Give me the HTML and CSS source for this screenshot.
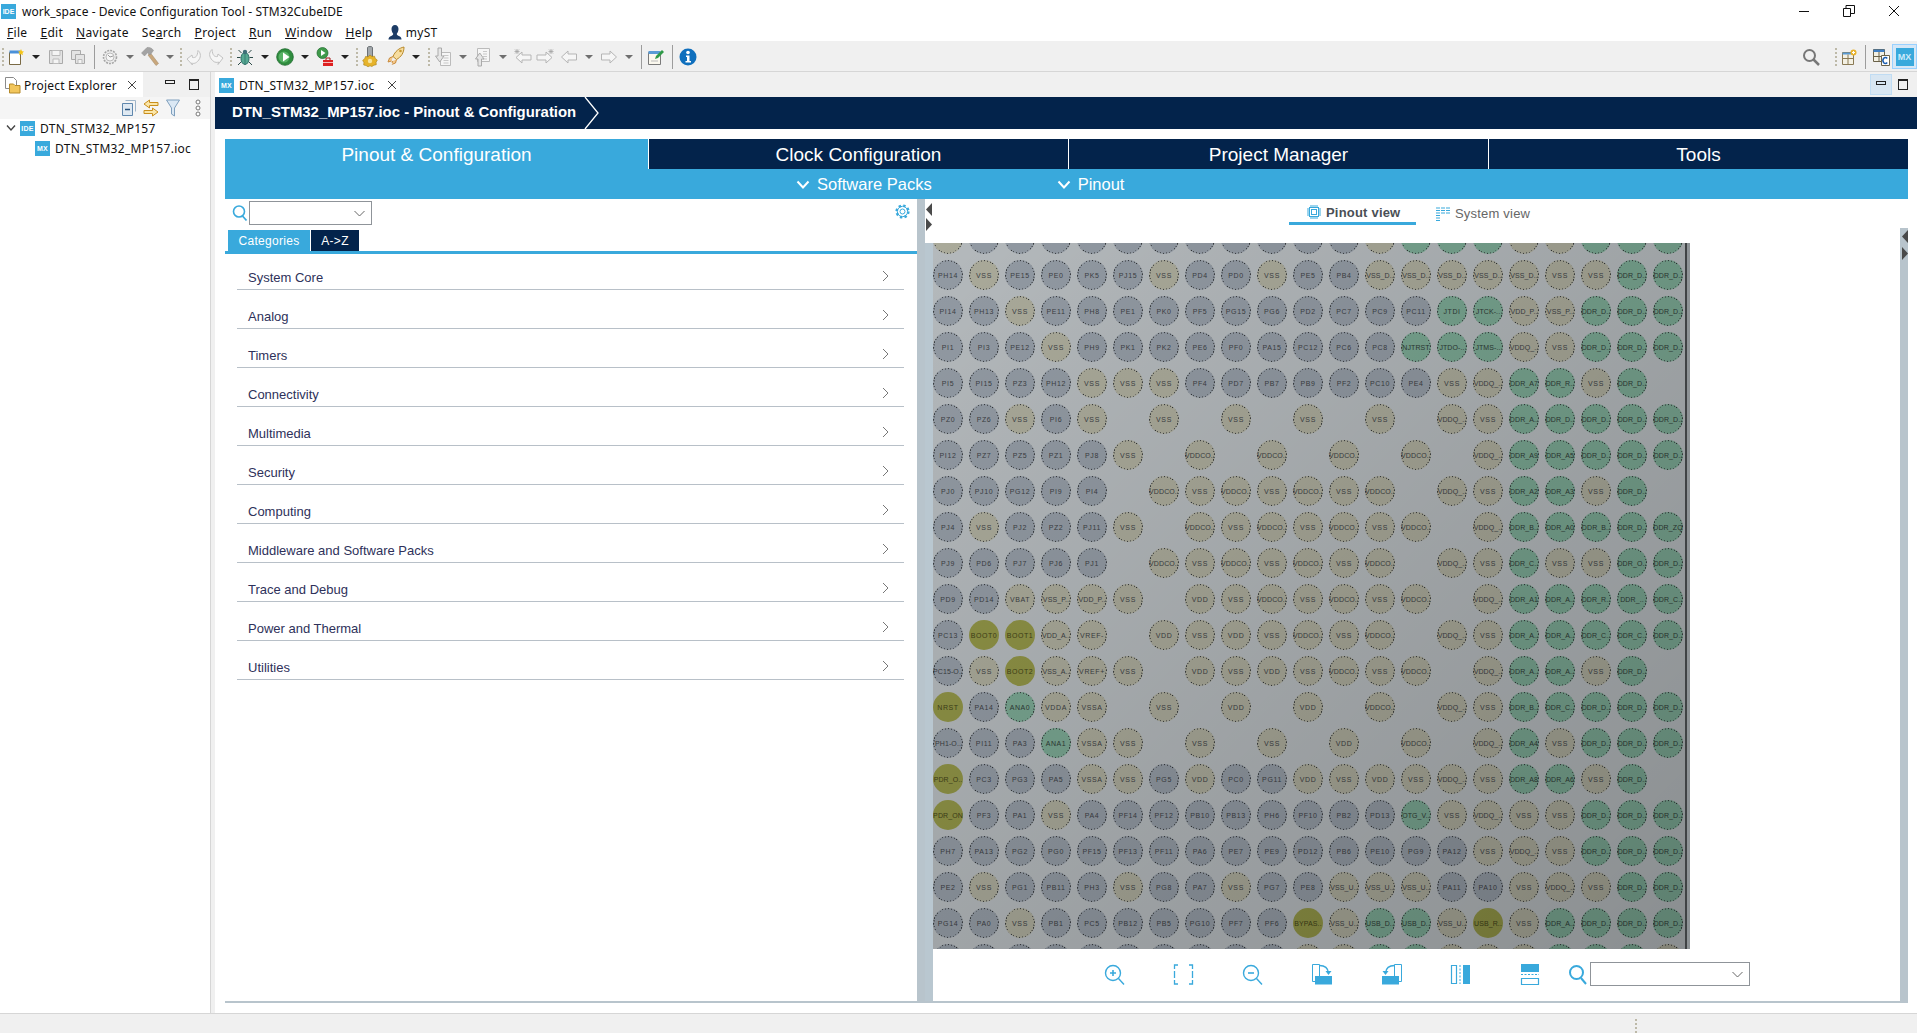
FILE: index.html
```html
<!DOCTYPE html>
<html lang="en">
<head>
  <meta charset="UTF-8" />
  <title>work_space - Device Configuration Tool - STM32CubeIDE</title>
  <link rel="stylesheet" href="styles.css">
</head>
<body>
  <div class="title-bar">
    <span class="badge badge-title">IDE</span>
    <span class="title-text">work_space - Device Configuration Tool - STM32CubeIDE</span>
    <div class="win-buttons">
      <svg width="12" height="12" viewBox="0 0 12 12"><path d="M1 6.500h10" stroke="#111" fill="none"/></svg>
      <svg width="12" height="12" viewBox="0 0 12 12"><path d="M.5 3.500h7v8h-7zM3 3.500V.5h8.500v8H7.500" stroke="#111" fill="none"/></svg>
      <svg width="12" height="12" viewBox="0 0 12 12"><path d="M1 1l10 10M11 1L1 11" stroke="#111" fill="none"/></svg>
    </div>
  </div>

  <nav class="menu-bar">
    <span><u>F</u>ile</span>
    <span><u>E</u>dit</span>
    <span><u>N</u>avigate</span>
    <span>Se<u>a</u>rch</span>
    <span><u>P</u>roject</span>
    <span><u>R</u>un</span>
    <span><u>W</u>indow</span>
    <span><u>H</u>elp</span>
    <span class="menu-user">
      <svg width="14" height="15" viewBox="0 0 14 15"><path d="M7 0c2.200 0 3.500 1.700 3.500 4S9.400 8 8.800 8.800c0 1 .6 1.500 2 2.100 1.700.7 2.700 1.300 2.700 3.600H.5c0-2.300 1-2.900 2.700-3.600 1.400-.6 2-1.100 2-2.100C4.600 8 3.500 6.300 3.500 4S4.800 0 7 0z" fill="#1d3c66"/></svg>
      myST
    </span>
  </nav>

  <div class="main-toolbar">
    <i class="grip w5"></i>
    <b class="tool"><svg width="18" height="18" viewBox="0 0 18 18"><path d="M2.500 4.500h11v12h-11z" fill="#fff" stroke="#7a6a45"/><path d="M2.500 2.500h11v3h-11z" fill="#4a90d9"/><path d="M14 1l1 2.200 2 .3-1.500 1.500.4 2.200-1.900-1.100-1.900 1.100.4-2.200L11 3.500l2-.3z" fill="#f5c518"/></svg></b>
    <b class="drop"></b>
    <b class="tool"><svg width="16" height="16" viewBox="0 0 16 16"><path d="M1.500 1.500h13v13h-13z" fill="#e4e4e4" stroke="#aaa"/><path d="M4 1.500h8v5H4zM5 10h6v4.500H5z" fill="#f4f4f4" stroke="#bbb"/></svg></b>
    <b class="tool"><svg width="16" height="16" viewBox="0 0 16 16"><path d="M1.500 1.500h9v9h-9z" fill="#e4e4e4" stroke="#aaa"/><path d="M5.500 5.500h9v9h-9z" fill="#e4e4e4" stroke="#aaa"/><path d="M8 10.500h4v4H8z" fill="#f4f4f4" stroke="#bbb"/></svg></b>
    <i class="sep w10"></i>
    <b class="tool"><svg width="16" height="16" viewBox="0 0 16 16"><circle cx="8" cy="8" r="6.500" fill="#ececec" stroke="#a5a5a5" stroke-width="1.600" stroke-dasharray="2 1"/><circle cx="8" cy="8" r="4" fill="#f6f6f6" stroke="#bbb"/><path d="M6 6l2 2 3-1" fill="none" stroke="#999"/></svg></b>
    <b class="drop off"></b>
    <b class="tool"><svg width="20" height="22" viewBox="0 0 20 22"><path d="M8 9l8 10.500 2.500-2L10.500 7z" fill="#c9a77c" stroke="#a8906f" stroke-width=".6"/><path d="M1.500 7L7 1.500c2.500-.5 5 .5 6.500 3L10 9 7.500 6.800 4.500 10z" fill="#a3a3a3" stroke="#8d8d8d" stroke-width=".5"/></svg></b>
    <b class="drop off"></b>
    <i class="grip w4"></i>
    <b class="tool"><svg width="18" height="18" viewBox="0 0 18 18"><path d="M2 11l5-4 .5 2.500c3 .5 5-1 5.500-7 3 2.500 3.500 7-.5 11-2.500 2.500-5 2-6 1.500L7.500 17z" fill="#f6f6f6" stroke="#c2c2c2"/></svg></b>
    <b class="tool"><svg width="18" height="18" viewBox="0 0 18 18"><path d="M16 11l-5-4-.5 2.500c-3 .5-5-1-5.500-7-3 2.500-3.500 7 .5 11 2.500 2.500 5 2 6 1.500l-.5 2.500z" fill="#f6f6f6" stroke="#c2c2c2" transform="translate(0 -1)"/></svg></b>
    <i class="grip w7"></i>
    <b class="tool"><svg width="18" height="18" viewBox="0 0 18 18"><path d="M5.500 5L2.500 2m10 3l3-3M4.500 9.500H1M13.500 9.500H17M5 14l-3 3m11-3l3 3" stroke="#2b4a47" fill="none"/><ellipse cx="9" cy="10.500" rx="4" ry="6" fill="#56a892" stroke="#2a6e66"/><path d="M9 5v11" stroke="#2a6e66" stroke-width=".7"/><circle cx="9" cy="4" r="2.200" fill="#3f6f78"/></svg></b>
    <b class="drop"></b>
    <b class="tool"><svg width="18" height="18" viewBox="0 0 18 18"><circle cx="9" cy="9" r="8.300" fill="#2f8c3e" stroke="#1d6a2d" stroke-width=".8"/><circle cx="8" cy="9" r="5.500" fill="#58b266"/><path d="M7 4.500l6.500 4.500L7 13.500z" fill="#fff"/></svg></b>
    <b class="drop"></b>
    <b class="tool"><svg width="18" height="20" viewBox="0 0 18 20"><circle cx="6.500" cy="6" r="5.500" fill="#3f9a4a" stroke="#1d6a2d" stroke-width=".7"/><path d="M5 3l4.500 3L5 9z" fill="#fff"/><path d="M7 13h10v6H7z" fill="#dd2020"/><path d="M10 13v-2h4v2" fill="none" stroke="#a51515"/><path d="M7 15.500h10" stroke="#fff" stroke-width=".7"/></svg></b>
    <b class="drop"></b>
    <i class="grip w5"></i>
    <b class="tool"><svg width="18" height="22" viewBox="0 0 18 22"><path d="M6.500 1.500c0-1.300 5-1.300 5 0V11h-5z" fill="#a3a8ac" stroke="#6b7074"/><path d="M9 10l2 1.500 2.500-.3.800 2.300 2 1.500-1.200 2.300.2 2.400-2.400.5-2 1.300L9 20.800l-2 1-1.900-1.300-2.400-.5.2-2.400L1.700 15.300l2-1.500.8-2.300 2.500.3z" fill="#e6b32a" stroke="#a77f16" stroke-width=".6" transform="translate(0 -1)"/><circle cx="9" cy="15" r="2.200" fill="#f7e39a"/></svg></b>
    <i class="space w4"></i>
    <b class="tool"><svg width="20" height="22" viewBox="0 0 20 22"><path d="M18 1c-5 1-9 4.500-11 9.500l3.500 3C15 11 18 7 18 1z" fill="#f7dda0" stroke="#b8892a"/><circle cx="14.500" cy="5" r="1.300" fill="#c99a30"/><path d="M7 10.500l-3.500 1.500L2 16l3.500-1 M10.500 13.500L9.500 17l-4 1.500 1-3.500" fill="#f3c78a" stroke="#c98a3a"/><path d="M3 20l3-3" stroke="#eee" stroke-width="2"/></svg></b>
    <b class="drop"></b>
    <i class="grip w7"></i>
    <b class="tool"><svg width="18" height="20" viewBox="0 0 18 20"><path d="M6.500 5.500h10v13h-10z" fill="#f6f6f6" stroke="#bbb"/><path d="M9.500 8.500h5M9.500 11h5M9.500 13.500h5M9.500 16h5" stroke="#c8c8c8"/><path d="M4 1h3.500v8H10l-4.250 6L1.500 9H4z" fill="#e6e6e6" stroke="#aaa"/></svg></b>
    <b class="drop off"></b>
    <b class="tool"><svg width="18" height="20" viewBox="0 0 18 20"><path d="M3.500 1.500h12v13h-12z" fill="#f6f6f6" stroke="#bbb"/><path d="M9 4.500h4M9 7h4M9 9.500h4M9 12h4" stroke="#c8c8c8"/><path d="M4 19h3.500v-7H10L5.750 6 1.500 12H4z" fill="#e6e6e6" stroke="#aaa"/></svg></b>
    <b class="drop off"></b>
    <b class="tool"><svg width="20" height="18" viewBox="0 0 20 18"><path d="M9 4L3 9.500 9 15v-3h9V7H9z" fill="#f6f6f6" stroke="#b5b5b5"/><path d="M2 1.500l4 4m0-4l-4 4M4 1v5M1.500 3.500h5" stroke="#a5a5a5" stroke-width=".8"/></svg></b>
    <b class="tool"><svg width="20" height="18" viewBox="0 0 20 18"><path d="M11 4l6 5.500-6 5.500v-3H2V7h9z" fill="#f6f6f6" stroke="#b5b5b5"/><path d="M14 1.500l4 4m0-4l-4 4M16 1v5M13.500 3.500h5" stroke="#a5a5a5" stroke-width=".8"/></svg></b>
    <i class="space w2"></i>
    <b class="tool"><svg width="18" height="16" viewBox="0 0 18 16"><path d="M8 2L1.500 8 8 14v-3h8.500V5H8z" fill="#f6f6f6" stroke="#b5b5b5"/></svg></b>
    <b class="drop off"></b>
    <b class="tool"><svg width="18" height="16" viewBox="0 0 18 16"><path d="M10 2l6.500 6L10 14v-3H1.500V5H10z" fill="#f6f6f6" stroke="#b5b5b5"/></svg></b>
    <b class="drop off"></b>
    <i class="sep w7"></i>
    <b class="tool"><svg width="18" height="18" viewBox="0 0 18 18"><path d="M1.500 4.500h12v12h-12z" fill="#fbf8ee" stroke="#7a7a7a"/><path d="M1.500 3h12v3h-12z" fill="#5a9bd5"/><path d="M9 8l6-6 2 2-6 6-3 1z" fill="#2f9a47"/><path d="M4 13h7" stroke="#bbb"/></svg></b>
    <i class="sep w10"></i>
    <b class="tool"><svg width="18" height="18" viewBox="0 0 18 18"><circle cx="9" cy="9" r="8.500" fill="#0f6fbd"/><circle cx="9" cy="4.500" r="1.800" fill="#fff"/><path d="M7 7.500h3.500V13H12v1.500H6.500V13H8V9H7z" fill="#fff"/></svg></b>

    <b class="tool tool-right"><svg width="18" height="18" viewBox="0 0 18 18"><circle cx="7.500" cy="7.500" r="5.500" fill="none" stroke="#777" stroke-width="2"/><path d="M11.500 11.500L17 17" stroke="#777" stroke-width="2.500"/></svg></b>
    <i class="space w11"></i>
    <i class="grip w5"></i>
    <b class="tool"><svg width="16" height="16" viewBox="0 0 16 16"><path d="M1.500 3.500h11v12h-11z" fill="#f4f1e4" stroke="#8a7a55"/><path d="M1.500 3.500h11v2h-11z" fill="#5a9bd5"/><path d="M1.500 9.500h11M7 5.500v10" stroke="#8a7a55"/><circle cx="12.500" cy="3.500" r="3" fill="#e8b32e"/><path d="M11 3.500h3M12.500 2v3" stroke="#fff"/></svg></b>
    <i class="sep w10 tall"></i>
    <b class="tool"><svg width="18" height="18" viewBox="0 0 18 18"><path d="M1.500 1.500h11v12h-11z" fill="#f4f1e4" stroke="#6b6249"/><path d="M1.500 1.500h11v2.500h-11z" fill="#3f7fc4"/><path d="M1.500 8.500h11M7 4v10" stroke="#6b6249"/><path d="M9.500 7.500h8v10h-8z" fill="#fff" stroke="#6b6249"/><path d="M15.200 10.500a2.400 3 0 1 0 0 4" fill="none" stroke="#1e5fb0" stroke-width="1.500"/></svg></b>
    <span class="tool-mx"><span class="badge">MX</span></span>
  </div>

  <div class="workbench">
    <aside class="explorer">
      <div class="view-tabs">
        <div class="view-tab">
          <svg width="17" height="18" viewBox="0 0 17 18"><path d="M1.500 1.500h8l3 3v8h-11z" fill="#fff" stroke="#8a8a8a"/><path d="M5.500 8h4l1.500 1.500h5v7.500H5.500z" fill="#f2c65c" stroke="#b58a2a"/></svg>
          <span>Project Explorer</span>
          <svg class="x-icon" width="10" height="10" viewBox="0 0 10 10"><path d="M1 1l8 8M9 1L1 9" stroke="#444" fill="none"/></svg>
        </div>
        <div class="view-ctrls">
          <span class="ctrl-min"></span>
          <span class="ctrl-max"></span>
        </div>
      </div>
      <div class="view-tools">
        <svg width="14" height="16" viewBox="0 0 14 16"><path d="M3.500.5h10v11" fill="none" stroke="#9fb5c9"/><path d="M.5 3.500h10v12H.5z" fill="#dfe9f2" stroke="#5f87ad"/><path d="M3 9.500h5" stroke="#27527c" stroke-width="1.500"/></svg>
        <svg width="16" height="18" viewBox="0 0 16 18"><path d="M6.500 1L1 5l5.500 4V6.500H15v-3H6.500z" fill="#fbe6a8" stroke="#c98f1d"/><path d="M9.500 9l5.500 4-5.500 4v-2.500H1v-3h8.500z" fill="#fbe6a8" stroke="#c98f1d"/></svg>
        <svg width="14" height="18" viewBox="0 0 14 18"><path d="M.5 1h13L8.500 9v8l-3-2V9z" fill="#dbe8f4" stroke="#7f9fbd"/></svg>
        <svg class="view-more" width="6" height="18" viewBox="0 0 6 18"><circle cx="3" cy="3" r="2" fill="#fff" stroke="#777"/><circle cx="3" cy="9" r="2" fill="#fff" stroke="#777"/><circle cx="3" cy="15" r="2" fill="#fff" stroke="#777"/></svg>
      </div>
      <div class="tree">
        <div class="tree-row">
          <svg width="10" height="8" viewBox="0 0 10 8"><path d="M1 1.500l4 4.500 4-4.500" fill="none" stroke="#444" stroke-width="1.400"/></svg>
          <span class="badge">IDE</span>
          <span>DTN_STM32_MP157</span>
        </div>
        <div class="tree-row tree-child">
          <span class="badge">MX</span>
          <span>DTN_STM32_MP157.ioc</span>
        </div>
      </div>
    </aside>

    <main class="editor">
      <div class="editor-tabs">
        <div class="editor-tab">
          <span class="badge">MX</span>
          <span>DTN_STM32_MP157.ioc</span>
          <svg class="x-icon" width="10" height="10" viewBox="0 0 10 10"><path d="M1 1l8 8M9 1L1 9" stroke="#444" fill="none"/></svg>
        </div>
        <div class="view-ctrls editor-ctrls">
          <span class="ctrl-box"><span class="ctrl-min"></span></span>
          <span class="ctrl-max"></span>
        </div>
      </div>

      <div class="crumb">
        <span class="crumb-text">DTN_STM32_MP157.ioc - Pinout &amp; Configuration</span>
        <svg width="16" height="32" viewBox="0 0 16 32"><path d="M1 0l13 16L1 32" fill="none" stroke="#fff" stroke-width="1.300"/></svg>
      </div>

      <div class="editor-body">
        <div class="main-tabs">
          <div class="main-tab active">Pinout &amp; Configuration</div>
          <div class="main-tab">Clock Configuration</div>
          <div class="main-tab">Project Manager</div>
          <div class="main-tab">Tools</div>
        </div>
        <div class="sub-bar">
          <span class="sub-item sub-packs"><svg width="14" height="10" viewBox="0 0 14 10"><path d="M1.500 1.500L7 7.500l5.500-6" fill="none" stroke="#fff" stroke-width="2"/></svg>Software Packs</span>
          <span class="sub-item sub-pinout"><svg width="14" height="10" viewBox="0 0 14 10"><path d="M1.500 1.500L7 7.500l5.500-6" fill="none" stroke="#fff" stroke-width="2"/></svg>Pinout</span>
        </div>

        <div class="work-area">
          <section class="left-panel">
            <div class="search-row">
              <svg class="search-icon" width="16" height="18" viewBox="0 0 16 18"><circle cx="7" cy="7.500" r="5.500" fill="none" stroke="#39a9dc" stroke-width="1.600"/><path d="M10.500 12l4 4.500" stroke="#39a9dc" stroke-width="1.800"/></svg>
              <div class="combo combo-small"><svg width="11" height="7" viewBox="0 0 11 7"><path d="M.5 1l5 5 5-5" fill="none" stroke="#666"/></svg></div>
              <svg class="gear" width="17" height="17" viewBox="0 0 17 17"><circle cx="8.500" cy="8.500" r="5.800" fill="none" stroke="#39a9dc" stroke-width="2.600" stroke-dasharray="2.300 2.260"/><circle cx="8.500" cy="8.500" r="5.200" fill="none" stroke="#39a9dc"/><circle cx="8.500" cy="8.500" r="2.500" fill="none" stroke="#39a9dc"/></svg>
            </div>
            <div class="list-tabs">
              <span class="list-tab active">Categories</span>
              <span class="list-tab">A-&gt;Z</span>
            </div>
            <ul class="cat-list">
              <li>System Core<svg width="7" height="12" viewBox="0 0 7 12"><path d="M1 1l5 5-5 5" fill="none" stroke="#777"/></svg></li>
              <li>Analog<svg width="7" height="12" viewBox="0 0 7 12"><path d="M1 1l5 5-5 5" fill="none" stroke="#777"/></svg></li>
              <li>Timers<svg width="7" height="12" viewBox="0 0 7 12"><path d="M1 1l5 5-5 5" fill="none" stroke="#777"/></svg></li>
              <li>Connectivity<svg width="7" height="12" viewBox="0 0 7 12"><path d="M1 1l5 5-5 5" fill="none" stroke="#777"/></svg></li>
              <li>Multimedia<svg width="7" height="12" viewBox="0 0 7 12"><path d="M1 1l5 5-5 5" fill="none" stroke="#777"/></svg></li>
              <li>Security<svg width="7" height="12" viewBox="0 0 7 12"><path d="M1 1l5 5-5 5" fill="none" stroke="#777"/></svg></li>
              <li>Computing<svg width="7" height="12" viewBox="0 0 7 12"><path d="M1 1l5 5-5 5" fill="none" stroke="#777"/></svg></li>
              <li>Middleware and Software Packs<svg width="7" height="12" viewBox="0 0 7 12"><path d="M1 1l5 5-5 5" fill="none" stroke="#777"/></svg></li>
              <li>Trace and Debug<svg width="7" height="12" viewBox="0 0 7 12"><path d="M1 1l5 5-5 5" fill="none" stroke="#777"/></svg></li>
              <li>Power and Thermal<svg width="7" height="12" viewBox="0 0 7 12"><path d="M1 1l5 5-5 5" fill="none" stroke="#777"/></svg></li>
              <li>Utilities<svg width="7" height="12" viewBox="0 0 7 12"><path d="M1 1l5 5-5 5" fill="none" stroke="#777"/></svg></li>
            </ul>
          </section>

          <div class="sash-left">
            <div class="sash-arrows">
              <svg width="8" height="15" viewBox="0 0 8 15"><path d="M7 1v13L1 7.500z" fill="#4a4a4a"/></svg>
              <svg width="8" height="15" viewBox="0 0 8 15"><path d="M1 1v13l6-6.500z" fill="#4a4a4a"/></svg>
            </div>
          </div>

          <section class="right-panel">
            <div class="view-switch">
              <div class="switch-tab active">
                <svg width="14" height="14" viewBox="0 0 14 14"><rect x="2.500" y="2.500" width="9" height="9" fill="none" stroke="#39a9dc"/><rect x="4.500" y="4.500" width="5" height="5" fill="none" stroke="#39a9dc"/><path d="M4 0v2m2-2v2m2-2v2m2-2v2M4 12v2m2-2v2m2-2v2m2-2v2M0 4h2M0 6h2M0 8h2M0 10h2M12 4h2m-2 2h2m-2 2h2m-2 2h2" stroke="#39a9dc"/></svg>
                Pinout view
              </div>
              <div class="switch-tab">
                <svg width="14" height="14" viewBox="0 0 14 14"><path d="M0 1h4M0 3.500h4M0 6h4M0 8.500h4M0 11h4M0 13.500h4M5 1h4M5 3.500h4M5 6h4M10 1h4M10 3.500h4M10 6h4" stroke="#39a9dc" stroke-width="1.200"/></svg>
                System view
              </div>
            </div>
            <div class="pin-view">
              <div class="pin-canvas">
                <div class="pin-grid" id="pinGrid"></div>
              </div>
            </div>
            <div class="zoom-bar">
              <span class="zoom-cell"><svg width="21" height="21" viewBox="0 0 21 21"><circle cx="9" cy="9" r="7.500" fill="none" stroke="#39a9dc" stroke-width="1.400"/><path d="M14.500 14.500L20 20.500" stroke="#39a9dc" stroke-width="1.400"/><path d="M6 9h6M9 6v6" stroke="#39a9dc" stroke-width="1.600"/></svg></span>
              <span class="zoom-cell"><svg width="21" height="21" viewBox="0 0 21 21"><path d="M5 1H1.500v4M16 1h3.500v4M5 20H1.500v-4M16 20h3.500v-4M1.500 7v7" fill="none" stroke="#39a9dc" stroke-width="1.300"/><path d="M19.500 7v7" stroke="#39a9dc" stroke-width="1.300"/></svg></span>
              <span class="zoom-cell"><svg width="21" height="21" viewBox="0 0 21 21"><circle cx="9" cy="9" r="7.500" fill="none" stroke="#39a9dc" stroke-width="1.400"/><path d="M14.500 14.500L20 20.500" stroke="#39a9dc" stroke-width="1.400"/><path d="M6 9h6" stroke="#39a9dc" stroke-width="1.600"/></svg></span>
              <span class="zoom-cell"><svg width="21" height="21" viewBox="0 0 21 21"><path d="M.5.500h7v17h-7z" fill="none" stroke="#39a9dc"/><path d="M3 12h17v8.500H3z" fill="#39a9dc"/><path d="M7.500 1.500C13 1.500 16 4 16.500 9" fill="none" stroke="#39a9dc" stroke-width="1.300"/><path d="M13.500 7h6l-3 4z" fill="#39a9dc"/></svg></span>
              <span class="zoom-cell"><svg width="21" height="21" viewBox="0 0 21 21"><path d="M13.500.500h7v17h-7z" fill="none" stroke="#39a9dc"/><path d="M1 12h17v8.500H1z" fill="#39a9dc"/><path d="M13.500 1.500C8 1.500 5 4 4.500 9" fill="none" stroke="#39a9dc" stroke-width="1.300"/><path d="M1.500 7h6l-3 4z" fill="#39a9dc"/></svg></span>
              <span class="zoom-cell"><svg width="21" height="21" viewBox="0 0 21 21"><path d="M1.500 1.500h5v18h-5z" fill="none" stroke="#39a9dc" stroke-width="1.200"/><path d="M10 1v19" stroke="#39a9dc" stroke-dasharray="2 1.500"/><path d="M13 1h7v19h-7z" fill="#39a9dc"/></svg></span>
              <span class="zoom-cell"><svg width="21" height="21" viewBox="0 0 21 21"><path d="M2 0h18v8H2z" fill="#39a9dc"/><path d="M2 10.500h18" stroke="#39a9dc" stroke-dasharray="2 1.500"/><path d="M2.500 14.500h17v6h-17z" fill="none" stroke="#39a9dc" stroke-width="1.200"/></svg></span>
              <svg class="zoom-search" width="20" height="21" viewBox="0 0 20 21"><circle cx="8.500" cy="8.500" r="6.500" fill="none" stroke="#39a9dc" stroke-width="2"/><path d="M13 14l5 6" stroke="#39a9dc" stroke-width="2"/></svg>
              <div class="combo combo-zoom"><svg width="11" height="7" viewBox="0 0 11 7"><path d="M.5 1l5 5 5-5" fill="none" stroke="#666"/></svg></div>
            </div>
          </section>

          <div class="sash-right">
            <svg width="9" height="15" viewBox="0 0 9 15"><path d="M8 1v13L2 7.500z" fill="#4a4a4a"/></svg>
            <svg width="9" height="15" viewBox="0 0 9 15"><path d="M2 1v13l6-6.500z" fill="#4a4a4a"/></svg>
          </div>
        </div>
      </div>
    </main>
  </div>

  <div class="status-bar"><i class="grip w5"></i></div>

  <script src="script.js"></script>
</body>
</html>
```

FILE: styles.css
```css
* {
  box-sizing: border-box;
}

body {
  margin: 0;
  height: 100vh;
  overflow: hidden;
  display: flex;
  flex-direction: column;
  font-family: "Noto Sans", sans-serif;
  font-size: 12px;
  color: #111;
  background-color: #fff;
}

.badge {
  width: 15px;
  height: 15px;
  flex: none;
  display: inline-flex;
  align-items: center;
  justify-content: center;
  background-color: #39a9dc;
  color: #fff;
  font-family: "Liberation Sans", sans-serif;
  font-size: 7px;
  font-weight: bold;
}

/* window title + menu */
.title-bar {
  height: 22px;
  display: flex;
  align-items: center;
  padding-left: 1px;
  flex: none;
}

.title-text {
  margin-left: 6px;
  letter-spacing: .07px;
  white-space: nowrap;
}

.win-buttons {
  margin-left: auto;
  display: flex;
  gap: 33px;
  padding-right: 17px;
}

.menu-bar {
  height: 19px;
  flex: none;
  display: flex;
  align-items: center;
  gap: 13px;
  padding: 1px 0 0 7px;
  letter-spacing: .3px;
  white-space: nowrap;
}

.menu-user {
  display: flex;
  align-items: center;
  gap: 4px;
  margin-left: 2px;
}

/* main toolbar */
.main-toolbar {
  height: 31px;
  flex: none;
  display: flex;
  align-items: center;
  padding-top: 1px;
  background-color: #f0f0f0;
  border-bottom: 1px solid #d6d6d6;
}

.tool {
  width: 22px;
  height: 24px;
  flex: none;
  display: flex;
  align-items: center;
  justify-content: center;
}

.tool-right {
  margin-left: auto;
}

.drop {
  width: 18px;
  flex: none;
  display: flex;
  justify-content: center;
}

.drop::after {
  content: "";
  border-left: 4px solid transparent;
  border-right: 4px solid transparent;
  border-top: 4px solid #222;
}

.drop.off::after {
  border-top-color: #6f6f6f;
}

.grip,
.sep,
.space {
  display: flex;
  flex: none;
  justify-content: center;
}

.grip::after {
  content: "";
  height: 18px;
  border-left: 2px dotted #bdb9a8;
}

.sep::after {
  content: "";
  height: 24px;
  border-left: 1px solid #9c9c9c;
}

.w2 { width: 2px; }
.w4 { width: 4px; }
.w5 { width: 5px; }
.w7 { width: 7px; }
.w10 { width: 10px; }
.w11 { width: 11px; }

.tool-mx {
  width: 25px;
  height: 25px;
  flex: none;
  display: flex;
  align-items: center;
  justify-content: center;
  background-color: #d5e7f7;
  border: 1px solid #99d1ff;
}

.tool-mx .badge {
  width: 18px;
  height: 18px;
  font-size: 9px;
  color: #cdeafa;
}

/* workbench */
.workbench {
  flex: 1;
  min-height: 0;
  display: flex;
  background-color: #f0f0f0;
}

.explorer {
  width: 211px;
  flex: none;
  display: flex;
  flex-direction: column;
  background-color: #fff;
  border-right: 1px solid #d6d6d6;
}

.view-tabs {
  height: 25px;
  flex: none;
  display: flex;
  background-color: #f0f0f0;
}

.view-tab {
  width: 143px;
  display: flex;
  align-items: center;
  gap: 3px;
  padding: 1px 0 0 4px;
  background-color: #fff;
  letter-spacing: .22px;
  white-space: nowrap;
}

.x-icon {
  margin-left: 7px;
  flex: none;
}

.view-ctrls {
  flex: 1;
  display: flex;
  align-items: center;
  justify-content: flex-end;
  gap: 14px;
  padding-right: 11px;
}

.ctrl-min {
  display: block;
  width: 10px;
  height: 4px;
  border: 1px solid #222;
  margin-bottom: 5px;
}

.ctrl-max {
  display: block;
  width: 10px;
  height: 11px;
  border: 1px solid #222;
  border-top-width: 2px;
}

.view-tools {
  height: 22px;
  flex: none;
  display: flex;
  align-items: center;
  justify-content: flex-end;
  gap: 7px;
  padding-right: 9px;
  background-color: #f5f5f5;
}

.view-more {
  margin-left: 8px;
}

.tree {
  margin-top: -1px;
}

.tree-row {
  height: 20px;
  display: flex;
  align-items: center;
  gap: 5px;
  padding-left: 6px;
  letter-spacing: .28px;
  white-space: nowrap;
}

.tree-row .badge {
  margin-left: -1px;
}

.tree-child {
  padding-left: 36px;
}

.editor {
  width: 1702px;
  flex: none;
  margin-left: 4px;
  display: flex;
  flex-direction: column;
  background-color: #fff;
}

.editor-tabs {
  height: 25px;
  flex: none;
  display: flex;
  background-color: #f0f0f0;
}

.editor-tab {
  width: 185px;
  display: flex;
  align-items: center;
  gap: 5px;
  padding: 1px 0 0 4px;
  background-color: #fff;
  letter-spacing: .25px;
  white-space: nowrap;
}

.editor-ctrls {
  gap: 6px;
  padding-right: 9px;
}

.ctrl-box {
  width: 22px;
  height: 21px;
  display: flex;
  align-items: center;
  justify-content: center;
  background-color: #d8e6f2;
  border: 1px solid #c0dcf3;
}

.ctrl-box .ctrl-min {
  margin-bottom: 3px;
}

.crumb {
  height: 32px;
  flex: none;
  display: flex;
  align-items: center;
  gap: 8px;
  padding-left: 17px;
  background-color: #03234b;
  color: #fff;
  font-family: "Liberation Sans", sans-serif;
  font-size: 14.900px;
  font-weight: bold;
  white-space: nowrap;
}

.crumb-text {
  margin-top: -2px;
}

.editor-body {
  flex: 1;
  min-height: 0;
  display: flex;
  flex-direction: column;
  padding: 10px 9px 10px 10px;
  font-family: "Liberation Sans", sans-serif;
}

.main-tabs {
  height: 30px;
  flex: none;
  display: grid;
  grid-template-columns: 423px 420px 420px 420px;
  background-color: #03234b;
}

.main-tab {
  display: flex;
  align-items: center;
  justify-content: center;
  padding-top: 1px;
  color: #fff;
  font-size: 19px;
  border-left: 1px solid #fff;
}

.main-tab.active {
  background-color: #39a9dc;
  border-left: none;
}

.sub-bar {
  height: 30px;
  flex: none;
  display: flex;
  align-items: center;
  padding-top: 1px;
  background-color: #39a9dc;
  color: #fff;
  font-size: 16.500px;
}

.sub-item {
  display: flex;
  align-items: center;
  gap: 7px;
}

.sub-packs {
  margin-left: 571px;
}

.sub-pinout {
  margin-left: 125px;
}

.work-area {
  flex: 1;
  min-height: 0;
  display: flex;
  border-bottom: 2px solid #b8c4cc;
}

.left-panel {
  width: 692px;
  flex: none;
  display: flex;
  flex-direction: column;
}

.search-row {
  height: 31px;
  flex: none;
  display: flex;
  align-items: flex-start;
  padding: 2px 6px 0 7px;
}

.search-icon {
  margin: 3px 1px 0 0;
  flex: none;
}

.gear {
  margin: 2px 0 0 auto;
}

.combo {
  height: 24px;
  display: flex;
  align-items: center;
  justify-content: flex-end;
  padding-right: 6px;
  background-color: #fff;
  border: 1px solid #8f9499;
}

.combo-small {
  width: 123px;
}

.combo-zoom {
  width: 160px;
}

.list-tabs {
  height: 24px;
  flex: none;
  display: flex;
  gap: 1px;
  padding-left: 3px;
  border-bottom: 3px solid #39a9dc;
  font-size: 12px;
  letter-spacing: .3px;
}

.list-tab {
  width: 48px;
  display: flex;
  align-items: center;
  justify-content: center;
  background-color: #03234b;
  color: #fff;
}

.list-tab.active {
  width: 82px;
  background-color: #39a9dc;
}

.cat-list {
  list-style: none;
  margin: 0;
  padding: 0 13px 0 12px;
}

.cat-list li {
  height: 39px;
  display: flex;
  align-items: flex-end;
  justify-content: space-between;
  padding: 0 15px 4px 11px;
  border-bottom: 1px solid #b8c0c8;
  color: #2e315a;
  font-size: 13px;
  line-height: 15px;
}

.cat-list li:first-child {
  height: 36px;
}

.cat-list svg {
  margin-bottom: 3px;
}

.sash-left {
  width: 16px;
  flex: none;
  display: flex;
  border-left: 8px solid #b8c4cc;
  background: linear-gradient(#fff 44px, #b9c7d0 44px);
}

.sash-arrows {
  display: flex;
  flex-direction: column;
  padding-top: 3px;
}

.right-panel {
  width: 967px;
  flex: none;
  display: flex;
  flex-direction: column;
}

.view-switch {
  height: 44px;
  flex: none;
  display: flex;
  align-items: flex-start;
  padding-left: 356px;
  font-size: 13px;
  color: #666;
}

.switch-tab {
  height: 26px;
  display: flex;
  align-items: center;
  gap: 5px;
  padding: 3px 20px 0 20px;
  letter-spacing: .2px;
}

.switch-tab.active {
  width: 127px;
  padding: 3px 0 0 18px;
  color: #4a4f55;
  font-weight: bold;
  border-bottom: 3px solid #39a9dc;
}

/* pin map */
.pin-view {
  width: 757px;
  height: 706px;
  flex: none;
  overflow: hidden;
  border-right: 3px solid #8e9396;
}

.pin-canvas {
  position: relative;
  height: 100%;
  overflow: hidden;
  background-color: #b4b9bc;
  border-right: 2px solid #3f4244;
}

.pin-canvas::after {
  content: "";
  position: absolute;
  inset: 0;
  background: linear-gradient(135deg, rgba(0, 0, 0, 0), rgba(0, 0, 0, .23));
}

.pin-grid {
  display: grid;
  grid-template-columns: repeat(21, 30px);
  grid-auto-rows: 30px;
  gap: 6px;
  margin-top: -19px;
}

.pin {
  position: relative;
  display: flex;
  align-items: center;
  justify-content: center;
  border-radius: 50%;
  font-size: 7px;
  letter-spacing: .6px;
  white-space: nowrap;
  color: #3c4044;
}

.pin::before {
  content: "";
  position: absolute;
  inset: 0;
  border-radius: 50%;
  border: 1px solid #2f3235;
  -webkit-mask: repeating-conic-gradient(#000 0 5deg, transparent 5deg 12deg);
  mask: repeating-conic-gradient(#000 0 5deg, transparent 5deg 12deg);
}

.pin-long {
  letter-spacing: .1px;
}

.pin-io { background-color: #929aa3; }
.pin-pwr { background-color: #aaaa9a; }
.pin-ok { background-color: #7aa792; color: #2e3a35; }
.pin-sys { background-color: #8f9346; color: #3f4118; }
.pin-sys::before { display: none; }

.zoom-bar {
  flex: 1;
  display: flex;
  align-items: center;
  padding: 0 0 2px 147px;
}

.zoom-cell {
  width: 69.200px;
  flex: none;
  display: flex;
  justify-content: center;
}

.zoom-search {
  margin: 0 2px 0 4px;
  flex: none;
}

.sash-right {
  width: 8px;
  flex: none;
  display: flex;
  flex-direction: column;
  margin-top: 29px;
  padding-top: 1px;
  gap: 2px;
  background-color: #b8c4cc;
}

.status-bar {
  height: 20px;
  flex: none;
  display: flex;
  padding-left: 1633px;
  background-color: #f0f0f0;
  border-top: 1px solid #d6d6d6;
}

.status-bar .grip::after {
  margin-top: 5px;
}
```

FILE: script.js
```js
// pin map of the package, one string per ball row ("-" = no ball)
const rows = [
  "PH14 VSS PE15 PE0 PK5 PJ15 VSS PD4 PD0 VSS PE5 PB4 VSS_D.. VSS_D.. VSS_D.. VSS_D.. VSS_D.. VSS VSS DDR_D.. DDR_D..",
  "PI14 PH13 VSS PE11 PH8 PE1 PK0 PF5 PG15 PG6 PD2 PC7 PC9 PC11 JTDI JTCK-.. VDD_P.. VSS_P.. DDR_D.. DDR_D.. DDR_D..",
  "PI1 PI3 PE12 VSS PH9 PK1 PK2 PE6 PF0 PA15 PC12 PC6 PC8 NJTRST JTDO-.. JTMS-.. VDDQ_.. VSS DDR_D.. DDR_D.. DDR_D..",
  "PI5 PI15 PZ3 PH12 VSS VSS VSS PF4 PD7 PB7 PB9 PF2 PC10 PE4 VSS VDDQ_.. DDR_A7 DDR_R.. VSS DDR_D.. -",
  "PZ0 PZ6 VSS PI6 VSS - VSS - VSS - VSS - VSS - VDDQ_.. VSS DDR_A.. DDR_D.. DDR_D.. DDR_D.. DDR_D..",
  "PI12 PZ7 PZ5 PZ1 PJ8 VSS - VDDCO.. - VDDCO.. - VDDCO.. - VDDCO.. - VDDQ_.. DDR_A9 DDR_A5 DDR_D.. DDR_D.. DDR_D..",
  "PJ0 PJ10 PG12 PI9 PI4 - VDDCO.. VSS VDDCO.. VSS VDDCO.. VSS VDDCO.. - VDDQ_.. VSS DDR_A2 DDR_A3 VSS DDR_D.. -",
  "PJ4 VSS PJ2 PZ2 PJ11 VSS - VDDCO.. VSS VDDCO.. VSS VDDCO.. VSS VDDCO.. - VDDQ_.. DDR_B.. DDR_A0 DDR_B.. DDR_D.. DDR_ZQ",
  "PJ9 PD6 PJ7 PJ6 PJ1 - VDDCO.. VSS VDDCO.. VSS VDDCO.. VSS VDDCO.. - VDDQ_.. VSS DDR_C.. VSS VSS DDR_O.. DDR_D..",
  "PD9 PD14 VBAT VSS_P.. VDD_P.. VSS - VDD VSS VDDCO.. VSS VDDCO.. VSS VDDCO.. - VDDQ_.. DDR_A1 DDR_A.. DDR_R.. DDR_.. DDR_C..",
  "PC13 BOOT0 BOOT1 VDD_A.. VREF- - VDD VSS VDD VSS VDDCO.. VSS VDDCO.. - VDDQ_.. VSS DDR_A.. DDR_A.. DDR_C.. DDR_C.. DDR_D..",
  "PC15-O.. VSS BOOT2 VSS_A.. VREF+ VSS - VDD VSS VDD VSS VDDCO.. VSS VDDCO.. - VDDQ_.. DDR_A.. DDR_A.. VSS DDR_D.. -",
  "NRST PA14 ANA0 VDDA VSSA - VSS - VDD - VDD - VDDCO.. - VDDQ_.. VSS DDR_B.. DDR_C.. DDR_D.. DDR_D.. DDR_D..",
  "PH1-O.. PI11 PA3 ANA1 VSSA VSS - VSS - VSS - VDD - VDDCO.. - VDDQ_.. DDR_A4 VSS DDR_D.. DDR_D.. DDR_D..",
  "PDR_O.. PC3 PG3 PA5 VSSA VSS PG5 VDD PC0 PG11 VDD VSS VDD VSS VDDQ_.. VSS DDR_A8 DDR_A6 VSS DDR_D.. -",
  "PDR_ON PF3 PA1 VSS PA4 PF14 PF12 PB10 PB13 PH6 PF10 PB2 PD13 OTG_V.. VSS VDDQ_.. VSS VSS DDR_D.. DDR_D.. DDR_D..",
  "PH7 PA13 PG2 PG0 PF15 PF13 PF11 PA6 PE7 PE9 PD12 PB6 PE10 PG9 PA12 VSS VDDQ_.. VSS DDR_D.. DDR_D.. DDR_D..",
  "PE2 VSS PG1 PB11 PH3 VSS PG8 PA7 VSS PG7 PE8 VSS_U.. VSS_U.. VSS_U.. PA11 PA10 VSS VDDQ_.. VSS DDR_D.. DDR_D..",
  "PG14 PA0 VSS PB1 PC5 PB12 PB5 PG10 PF7 PF6 BYPAS.. VSS_U.. USB_D.. USB_D.. VSS_U.. USB_R.. VSS DDR_A.. DDR_D.. DDR_D.. DDR_D..",
];

// the two rows cut off by the viewport only show their colour
const topRow = "pgggggggggggpnnnppnnn";
const bottomRow = "ggggggggggppnnpppnnnp";

const kinds = { g: "pin-io", p: "pin-pwr", n: "pin-ok" };
const grid = document.getElementById("pinGrid");

function pinClass(name) {
  if (/^(BOOT|NRST|PDR|BYPAS|USB_R)/.test(name)) return "pin-sys";
  if (/^(DDR|JT|NJT|ANA|OTG|USB_D)/.test(name)) return "pin-ok";
  if (/^(VSS|VDD|VBAT|VREF)/.test(name)) return "pin-pwr";
  return "pin-io";
}

function addPin(cls, label) {
  const el = document.createElement("div");
  if (cls) {
    el.className = "pin " + cls + (label.length > 5 ? " pin-long" : "");
    el.textContent = label;
  }
  grid.appendChild(el);
}

function addColourRow(str) {
  for (const c of str) addPin(kinds[c], "");
}

addColourRow(topRow);
rows.forEach((row) => {
  row.split(" ").forEach((name) => {
    if (name === "-") addPin(null, "");
    else addPin(pinClass(name), name);
  });
});
addColourRow(bottomRow);
```
